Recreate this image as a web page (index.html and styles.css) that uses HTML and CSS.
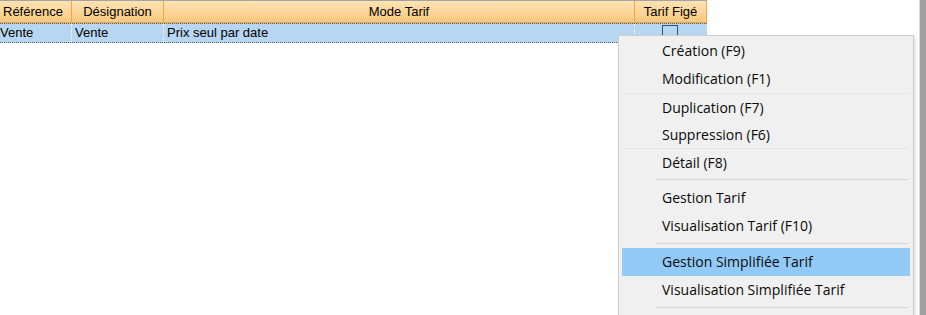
FILE: index.html
```html
<!DOCTYPE html>
<html lang="fr">
  <head>
    <meta charset="utf-8">
    <link rel="stylesheet" href="styles.css">
  </head>
  <body>
    <div class="window">
      <div class="gridArea">
        <div class="grid">
          <div class="gridHead">
            <div class="cell colRef">Référence</div>
            <div class="cell colDes">Désignation</div>
            <div class="cell colMode">Mode Tarif</div>
            <div class="cell colFige">Tarif Figé</div>
          </div>
          <div class="gridRow selected">
            <div class="cell colRef">Vente</div>
            <div class="cell colDes">Vente</div>
            <div class="cell colMode">Prix seul par date</div>
            <div class="cell colFige"><span class="check"></span></div>
          </div>
        </div>
        <ul class="contextMenu">
          <li class="menuItem">Création (F9)</li>
          <li class="menuItem">Modification (F1)</li>
          <li class="menuItem ruleTop">Duplication (F7)</li>
          <li class="menuItem short">Suppression (F6)</li>
          <li class="menuItem ruleTop">Détail (F8)</li>
          <li class="menuSep"></li>
          <li class="menuItem">Gestion Tarif</li>
          <li class="menuItem">Visualisation Tarif (F10)</li>
          <li class="menuSep"></li>
          <li class="menuItem hover">Gestion Simplifiée Tarif</li>
          <li class="menuItem">Visualisation Simplifiée Tarif</li>
          <li class="menuSep"></li>
        </ul>
      </div>
      <div class="frameEdge"></div>
    </div>
  </body>
</html>
```

FILE: styles.css
```css
html, body{
  margin: 0;
  padding: 0;
  height: 100%;
  background: #ffffff;
}
.window{
  display: flex;
  height: 315px;
  overflow: hidden;
}
.gridArea{
  position: relative;
  flex: 1;
  background: #ffffff;
  border-right: 1px solid #dadada;
  overflow: hidden;
}
.frameEdge{
  width: 6px;
  background: #9f9f9f;
}
.grid{
  margin-left: -4px;
  width: 711px;
  font-family: "Liberation Sans", Arial, sans-serif;
  font-size: 13px;
  color: #000000;
}
.gridHead{
  display: flex;
  height: 23px;
  box-sizing: border-box;
  border-top: 1px solid #a3a3a3;
  border-bottom: 1px solid #f2a33d;
  background: linear-gradient(#fde3b4, #f9c97f);
}
.gridHead .cell{
  text-align: center;
  line-height: 21px;
  border-right: 1px solid #f3a640;
}
.gridHead .colRef{
  text-align: left;
  padding-left: 7px;
}
.gridRow{
  display: flex;
  height: 20px;
  box-sizing: border-box;
  background: #b7d6f2;
  border-top: 1px dotted #555555;
  border-bottom: 1px dotted #555555;
}
.gridRow .cell{
  line-height: 18px;
  padding-left: 3px;
  border-right: 1px dotted #ffffff;
}
.gridRow .colRef{
  padding-left: 4px;
}
.gridRow .colFige{
  border-right: 0;
  padding-left: 0;
}
.cell{
  box-sizing: border-box;
  white-space: nowrap;
  overflow: hidden;
}
.colRef{ width: 76px; }
.colDes{ width: 92px; }
.colMode{ width: 471px; }
.colFige{ width: 72px; }
.check{
  display: block;
  width: 16px;
  height: 16px;
  box-sizing: border-box;
  margin: 1px 0 0 27px;
  border: 1px solid #3d4e66;
}
.contextMenu{
  position: absolute;
  left: 618px;
  top: 35px;
  width: 296px;
  height: 300px;
  box-sizing: border-box;
  margin: 0;
  padding: 1px 3px;
  list-style: none;
  background: #f0f0f0;
  border: 1px solid #cccccc;
  box-shadow: 2px 2px 3px rgba(0, 0, 0, 0.12);
  font-family: "Open Sans", "Noto Sans", sans-serif;
  font-size: 14px;
  color: #0a0a0a;
}
.menuItem{
  height: 28px;
  line-height: 28px;
  box-sizing: border-box;
  padding-left: 40px;
  white-space: nowrap;
}
.menuItem.short{
  height: 27px;
}
.menuItem.ruleTop{
  border-top: 1px solid #dce6f1;
  line-height: 27px;
  margin-right: 2px;
}
.menuItem.hover{
  background: #91c9f7;
}
.menuSep{
  height: 8px;
  box-sizing: border-box;
  margin: 0 2px 0 33px;
  padding-top: 3px;
}
.menuSep::after{
  content: "";
  display: block;
  height: 1px;
  background: #d7d7d7;
}
```
